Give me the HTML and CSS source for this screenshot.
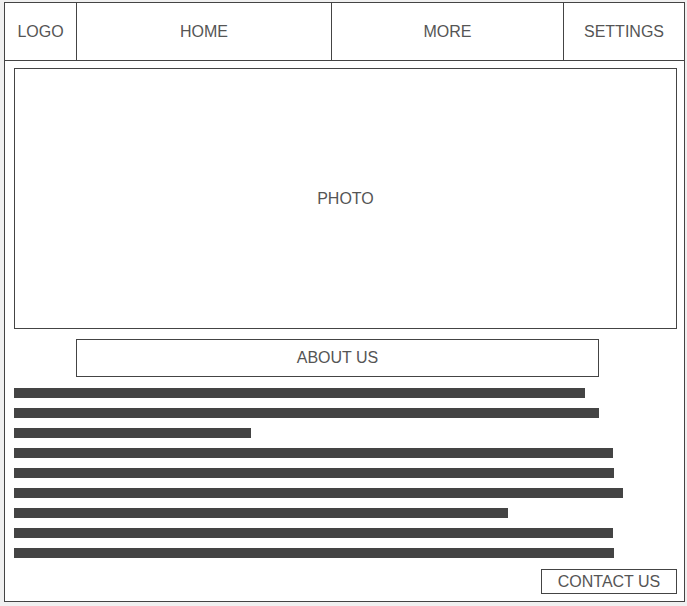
FILE: index.html
```html
<!DOCTYPE html>
<html>
<head>
<meta charset="utf-8">
<link rel="stylesheet" href="styles.css">
</head>
<body>
<div class="frame">
  <nav class="nav">
    <div class="cell logo">LOGO</div>
    <div class="cell home">HOME</div>
    <div class="cell more">MORE</div>
    <div class="cell settings">SETTINGS</div>
  </nav>
  <main class="content">
    <div class="photo">PHOTO</div>
    <div class="about">ABOUT US</div>
    <div class="bars">
      <div class="bar" style="width:571px"></div>
      <div class="bar" style="width:585px"></div>
      <div class="bar" style="width:237px"></div>
      <div class="bar" style="width:599px"></div>
      <div class="bar" style="width:600px"></div>
      <div class="bar" style="width:609px"></div>
      <div class="bar" style="width:494px"></div>
      <div class="bar" style="width:599px"></div>
      <div class="bar" style="width:600px"></div>
    </div>
    <div class="footer"><div class="contact">CONTACT US</div></div>
  </main>
</div>
</body>
</html>
```

FILE: styles.css
```css
html, body {
  margin: 0;
  padding: 0;
  background: #f0f0f0;
}
body {
  font-family: "Liberation Sans", Arial, sans-serif;
  font-size: 16px;
  color: #555;
  padding: 2px 2px 0 4px;
}
.frame {
  box-sizing: border-box;
  width: 681px;
  height: 600px;
  border: 1px solid #444;
  background: #fff;
  display: flex;
  flex-direction: column;
}
.nav {
  display: grid;
  grid-template-columns: 72px 255px 232px 1fr;
  height: 58px;
  box-sizing: border-box;
  border-bottom: 1px solid #444;
}
.cell {
  display: flex;
  align-items: center;
  justify-content: center;
  border-right: 1px solid #444;
}
.cell.settings { border-right: none; }
.content {
  padding: 7px 7px 0 9px;
  display: flex;
  flex-direction: column;
}
.photo {
  box-sizing: border-box;
  height: 261px;
  border: 1px solid #444;
  display: flex;
  align-items: center;
  justify-content: center;
}
.about {
  box-sizing: border-box;
  margin: 10px 0 0 62px;
  width: 523px;
  height: 38px;
  border: 1px solid #444;
  display: flex;
  align-items: center;
  justify-content: center;
}
.bars {
  margin-top: 11px;
  display: flex;
  flex-direction: column;
  gap: 10px;
}
.bar {
  height: 10px;
  background: #444;
}
.footer {
  margin-top: 11px;
  display: flex;
  justify-content: flex-end;
}
.contact {
  box-sizing: border-box;
  width: 136px;
  height: 25px;
  border: 1px solid #444;
  display: flex;
  align-items: center;
  justify-content: center;
}
```
